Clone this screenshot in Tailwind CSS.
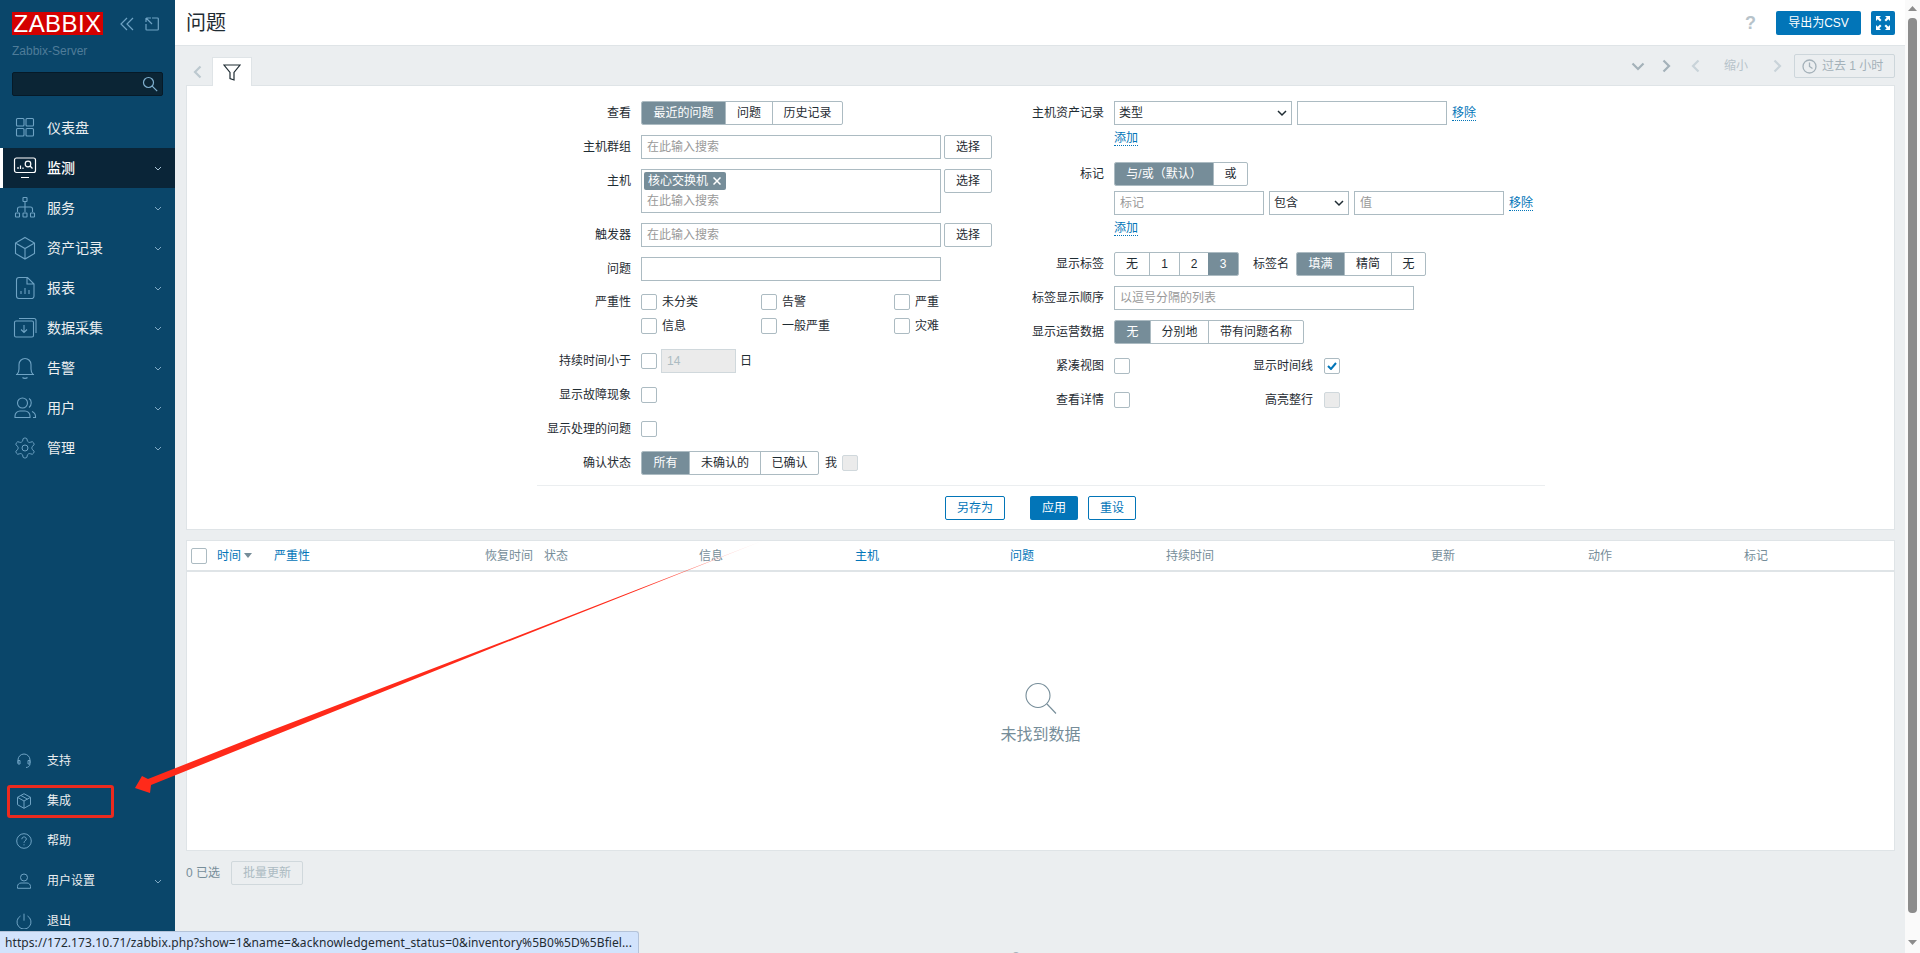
<!DOCTYPE html>
<html lang="zh-CN">
<head>
  <meta charset="UTF-8">
  <title>问题 - Zabbix</title>
  <script src="https://cdn.jsdelivr.net/npm/@tailwindcss/browser@4"></script>
</head>
<body class="relative flex h-[953px] overflow-hidden bg-[#ebeef0] font-['Liberation_Sans','Noto_Sans_CJK_SC',sans-serif] text-[12px] text-[#1f2c33]">

  <!-- sidebar -->
  <aside class="flex w-[175px] shrink-0 flex-col bg-[#0a466a] pb-[12px] text-[#ebeef0]">
    <div class="flex h-[23px] mt-[12px] items-center pl-[12px]">
      <div class="flex h-[23px] w-[91px] items-center justify-center bg-[#d40000] text-[24px] leading-none tracking-[0.4px] text-white">ZABBIX</div>
      <svg class="ml-[16px]" width="16" height="14" viewBox="0 0 16 14" fill="none" stroke="#6fa3c4" stroke-width="1.2"><path d="M8 1 2 7l6 6M14 1 8 7l6 6"/></svg>
      <svg class="ml-[10px]" width="14" height="14" viewBox="0 0 14 14" fill="none" stroke="#6fa3c4" stroke-width="1.2"><path d="M4 1H1.5v0M7 1h5.5a.8.8 0 0 1 .8.8v10.4a.8.8 0 0 1-.8.8H1.8a.8.8 0 0 1-.8-.8V7M1 1l6 6M2 1h4M1 1v4"/></svg>
    </div>
    <div class="mt-[9px] h-[15px] pl-[12px] leading-[15px] text-[#4f7c99]">Zabbix-Server</div>
    <div class="mx-[12px] mt-[13px] flex h-[24px] items-center justify-end rounded-[2px] border border-[#061a28] bg-[#0b2535] pr-[4px]">
      <svg width="16" height="16" viewBox="0 0 16 16" fill="none" stroke="#7fb0cf" stroke-width="1.2"><circle cx="6.5" cy="6.5" r="5"/><path d="m10.2 10.2 5 5"/></svg>
    </div>

    <nav class="mt-[12px] flex flex-col text-[14px]">
      <a class="flex h-[40px] items-center pl-[13px]">
        <svg class="h-[24px] w-[24px]" viewBox="0 0 24 24" fill="none" stroke="#6fa3c4" stroke-width="1.1"><rect x="3.5" y="2.5" width="7.5" height="7.5" rx="1"/><rect x="13" y="2.5" width="7.5" height="7.5" rx="1"/><rect x="3.5" y="12.5" width="7.5" height="7.5" rx="1"/><rect x="13" y="12.5" width="7.5" height="7.5" rx="1"/></svg>
        <span class="ml-[10px]">仪表盘</span>
      </a>
      <a class="flex h-[40px] items-center border-l-[3px] border-white bg-[#0a2538] pl-[10px] font-medium text-white">
        <svg class="h-[24px] w-[24px]" viewBox="0 0 24 24" fill="none" stroke="#fff" stroke-width="1.2"><rect x="1.5" y="2" width="21" height="14.5" rx="2"/><path d="M8 21.5h8M5 13v-2M7.5 13V9.5M10 13v-1.5"/><circle cx="15" cy="8" r="2.8"/><path d="m17 10 2.5 2.5"/></svg>
        <span class="ml-[10px]">监测</span>
        <svg class="ml-auto mr-[13px]" width="8" height="5" viewBox="0 0 8 5" fill="none" stroke="#a9c6d9"><path d="m1 1 3 3 3-3"/></svg>
      </a>
      <a class="flex h-[40px] items-center pl-[13px]">
        <svg class="h-[24px] w-[24px]" viewBox="0 0 24 24" fill="none" stroke="#6fa3c4" stroke-width="1.1"><rect x="10" y="1.5" width="4" height="4" rx=".6"/><path d="M12 5.5V11M4.5 16v-3a2 2 0 0 1 2-2h11a2 2 0 0 1 2 2v3M12 11v5"/><rect x="2.5" y="17" width="4" height="4" rx=".6"/><rect x="10" y="17" width="4" height="4" rx=".6"/><rect x="17.5" y="17" width="4" height="4" rx=".6"/></svg>
        <span class="ml-[10px]">服务</span>
        <svg class="ml-auto mr-[13px]" width="8" height="5" viewBox="0 0 8 5" fill="none" stroke="#7fa9c4"><path d="m1 1 3 3 3-3"/></svg>
      </a>
      <a class="flex h-[40px] items-center pl-[13px]">
        <svg class="h-[24px] w-[24px]" viewBox="0 0 24 24" fill="none" stroke="#6fa3c4" stroke-width="1.1"><path d="M12 1.5 21.5 7v10.5L12 23l-9.5-5.500V7zM2.500 7 12 12.500 21.500 7M12 12.500V23"/></svg>
        <span class="ml-[10px]">资产记录</span>
        <svg class="ml-auto mr-[13px]" width="8" height="5" viewBox="0 0 8 5" fill="none" stroke="#7fa9c4"><path d="m1 1 3 3 3-3"/></svg>
      </a>
      <a class="flex h-[40px] items-center pl-[13px]">
        <svg class="h-[24px] w-[24px]" viewBox="0 0 24 24" fill="none" stroke="#6fa3c4" stroke-width="1.1"><path d="M6 1.500h8.500L21 8v12a2.500 2.500 0 0 1-2.500 2.500H6A2.500 2.500 0 0 1 3.500 20V4A2.500 2.500 0 0 1 6 1.500zM14 1.500V8h7M8 18v-3M12 18v-6M16 18v-4"/></svg>
        <span class="ml-[10px]">报表</span>
        <svg class="ml-auto mr-[13px]" width="8" height="5" viewBox="0 0 8 5" fill="none" stroke="#7fa9c4"><path d="m1 1 3 3 3-3"/></svg>
      </a>
      <a class="flex h-[40px] items-center pl-[13px]">
        <svg class="h-[24px] w-[24px]" viewBox="0 0 24 24" fill="none" stroke="#6fa3c4" stroke-width="1.1"><rect x="1.500" y="5" width="19" height="16" rx="1.500"/><path d="M6 2.500h15a2 2 0 0 1 2 2V17M11 9v7.500M8 13.500l3 3 3-3"/></svg>
        <span class="ml-[10px]">数据采集</span>
        <svg class="ml-auto mr-[13px]" width="8" height="5" viewBox="0 0 8 5" fill="none" stroke="#7fa9c4"><path d="m1 1 3 3 3-3"/></svg>
      </a>
      <a class="flex h-[40px] items-center pl-[13px]">
        <svg class="h-[24px] w-[24px]" viewBox="0 0 24 24" fill="none" stroke="#6fa3c4" stroke-width="1.1"><path d="M4 18.500c1.500-1.500 2-3 2-5.500V8.500a6 6 0 0 1 12 0V13c0 2.500.5 4 2 5.500zM3 18.500h18M9.500 21.500c1.200 1.200 3.800 1.200 5 0"/></svg>
        <span class="ml-[10px]">告警</span>
        <svg class="ml-auto mr-[13px]" width="8" height="5" viewBox="0 0 8 5" fill="none" stroke="#7fa9c4"><path d="m1 1 3 3 3-3"/></svg>
      </a>
      <a class="flex h-[40px] items-center pl-[13px]">
        <svg class="h-[24px] w-[24px]" viewBox="0 0 24 24" fill="none" stroke="#6fa3c4" stroke-width="1.1"><circle cx="9.500" cy="7" r="5"/><path d="M2 21.500v-1.500c0-3 2.500-5 5-5h5c2.500 0 5 2 5 5v1.500zM16 2.500c3 1.500 3 7 0 9M19 15.500c2 .8 3.500 2.500 3.500 5v1h-2.500"/></svg>
        <span class="ml-[10px]">用户</span>
        <svg class="ml-auto mr-[13px]" width="8" height="5" viewBox="0 0 8 5" fill="none" stroke="#7fa9c4"><path d="m1 1 3 3 3-3"/></svg>
      </a>
      <a class="flex h-[40px] items-center pl-[13px]">
        <svg class="h-[24px] w-[24px]" viewBox="0 0 24 24" fill="none" stroke="#6fa3c4" stroke-width="1"><path d="M12.220 2h-.44a2 2 0 0 0-2 2v.18a2 2 0 0 1-1 1.730l-.43.25a2 2 0 0 1-2 0l-.15-.08a2 2 0 0 0-2.730.73l-.22.38a2 2 0 0 0 .73 2.730l.15.1a2 2 0 0 1 1 1.720v.51a2 2 0 0 1-1 1.740l-.15.09a2 2 0 0 0-.73 2.730l.22.38a2 2 0 0 0 2.730.73l.15-.08a2 2 0 0 1 2 0l.43.25a2 2 0 0 1 1 1.730V20a2 2 0 0 0 2 2h.44a2 2 0 0 0 2-2v-.18a2 2 0 0 1 1-1.730l.43-.25a2 2 0 0 1 2 0l.15.08a2 2 0 0 0 2.730-.73l.22-.39a2 2 0 0 0-.73-2.730l-.15-.08a2 2 0 0 1-1-1.740v-.5a2 2 0 0 1 1-1.740l.15-.09a2 2 0 0 0 .73-2.730l-.22-.38a2 2 0 0 0-2.730-.73l-.15.08a2 2 0 0 1-2 0l-.43-.25a2 2 0 0 1-1-1.730V4a2 2 0 0 0-2-2z"/><circle cx="12" cy="12" r="3"/></svg>
        <span class="ml-[10px]">管理</span>
        <svg class="ml-auto mr-[13px]" width="8" height="5" viewBox="0 0 8 5" fill="none" stroke="#7fa9c4"><path d="m1 1 3 3 3-3"/></svg>
      </a>
    </nav>

    <nav class="mt-auto flex flex-col">
      <a class="flex h-[40px] items-center pl-[16px]">
        <svg class="h-[16px] w-[16px]" viewBox="0 0 16 16" fill="none" stroke="#6fa3c4"><path d="M2 10V7a6 6 0 0 1 12 0v3M2 7.500v3.500h2V7.500zM14 7.500v3.500h-2V7.500zM14 11c0 2-2 3.500-4 3.500"/></svg>
        <span class="ml-[15px]">支持</span>
      </a>
      <a class="flex h-[40px] items-center pl-[16px]">
        <svg class="h-[16px] w-[16px]" viewBox="0 0 16 16" fill="none" stroke="#6fa3c4"><path d="M8 .7 14.500 4.300v7.400L8 15.300l-6.500-3.600V4.300zM1.500 4.300 8 8l6.500-3.700M8 8v7.300M5 2.500l6.500 3.700"/></svg>
        <span class="ml-[15px]">集成</span>
      </a>
      <a class="flex h-[40px] items-center pl-[16px]">
        <svg class="h-[16px] w-[16px]" viewBox="0 0 16 16" fill="none" stroke="#6fa3c4"><circle cx="8" cy="8" r="7.300"/><path d="M5.800 6.200c0-3 4.500-3 4.500-.2 0 1.800-2.300 1.800-2.300 3.800M8 11.300v1"/></svg>
        <span class="ml-[15px]">帮助</span>
      </a>
      <a class="flex h-[40px] items-center pl-[16px]">
        <svg class="h-[16px] w-[16px]" viewBox="0 0 16 16" fill="none" stroke="#6fa3c4"><circle cx="8" cy="4.500" r="3.500"/><path d="M1.500 15.300v-1.800c0-2 1.500-3.500 3.500-3.500h6c2 0 3.500 1.500 3.500 3.500v1.800z"/></svg>
        <span class="ml-[15px]">用户设置</span>
        <svg class="ml-auto mr-[13px]" width="8" height="5" viewBox="0 0 8 5" fill="none" stroke="#7fa9c4"><path d="m1 1 3 3 3-3"/></svg>
      </a>
      <a class="flex h-[40px] items-center pl-[16px]">
        <svg class="h-[16px] w-[16px]" viewBox="0 0 16 16" fill="none" stroke="#6fa3c4"><path d="M8 .7v7M4.500 3a7 7 0 1 0 7 0"/></svg>
        <span class="ml-[15px]">退出</span>
      </a>
    </nav>
  </aside>

  <!-- main -->
  <main class="flex w-[1730px] shrink-0 flex-col overflow-hidden">
    <header class="flex h-[46px] shrink-0 items-center border-b border-[#dfe4e7] bg-white pl-[11px] pr-[10px]">
      <h1 class="text-[20px] font-normal leading-none">问题</h1>
      <span class="ml-auto mr-[20px] text-[18px] font-bold leading-none text-[#b7c3ca]">?</span>
      <button class="h-[24px] w-[85px] rounded-[2px] bg-[#0275b8] text-white">导出为CSV</button>
      <button class="ml-[10px] flex h-[24px] w-[24px] items-center justify-center rounded-[2px] bg-[#0275b8]">
        <svg width="16" height="16" viewBox="0 0 16 16" fill="#fff"><path d="M1 1h5L4.300 2.700 6.500 5 5 6.500 2.700 4.300 1 6zM15 1v5l-1.700-1.700L11 6.500 9.500 5l2.200-2.300L10 1zM1 15v-5l1.700 1.700L5 9.500 6.500 11l-2.200 2.300L6 15zM15 15h-5l1.700-1.700L9.500 11 11 9.500l2.300 2.200L15 10z"/></svg>
      </button>
    </header>

    <div class="flex shrink-0 flex-col pl-[11px] pr-[10px]">
      <!-- filter tab bar -->
      <div class="flex h-[40px] items-end">
        <div class="flex h-[29px] w-[26px] items-center pl-[7px]">
          <svg width="9" height="14" viewBox="0 0 9 14" fill="none" stroke="#bcc8cf" stroke-width="2.200"><path d="M7.500 1.500 2 7l5.500 5.500"/></svg>
        </div>
        <div class="z-10 flex h-[29px] w-[40px] items-center justify-center border border-b-0 border-[#dfe4e7] bg-white">
          <svg width="18" height="17" viewBox="0 0 18 17" fill="none" stroke="#1f2c33" stroke-width="1.200"><path d="M1 1h16l-6 7.500V16l-4-1.500v-6z"/></svg>
        </div>
        <div class="ml-auto flex h-[24px] items-center self-center text-[#b7c3ca]">
          <svg class="mr-[17px]" width="14" height="9" viewBox="0 0 14 9" fill="none" stroke="#a4b1b9" stroke-width="2.200"><path d="m1.500 1.500 5.500 5.500 5.500-5.500"/></svg>
          <svg class="mr-[20px]" width="9" height="14" viewBox="0 0 9 14" fill="none" stroke="#a4b1b9" stroke-width="2.200"><path d="M1.500 1.500 7 7l-5.500 5.500"/></svg>
          <svg class="mr-[24px]" width="9" height="14" viewBox="0 0 9 14" fill="none" stroke="#c9d3d9" stroke-width="2.200"><path d="M7.500 1.500 2 7l5.500 5.500"/></svg>
          <span class="mr-[25px]">缩小</span>
          <svg class="mr-[12px]" width="9" height="14" viewBox="0 0 9 14" fill="none" stroke="#c9d3d9" stroke-width="2.200"><path d="M1.500 1.500 7 7l-5.500 5.500"/></svg>
          <div class="flex h-[24px] w-[101px] items-center rounded-[2px] border border-[#cdd6db] pl-[7px] text-[#a4b1b9]">
            <svg width="15" height="15" viewBox="0 0 15 15" fill="none" stroke="#a4b1b9" stroke-width="1.300"><circle cx="7.500" cy="7.500" r="6.500"/><path d="M7.500 3.500v4l3 2"/></svg>
            <span class="ml-[5px] whitespace-nowrap">过去 1 小时</span>
          </div>
        </div>
      </div>

      <!-- filter panel -->
      <section class="-mt-px h-[445px] border border-[#dfe4e7] bg-white pt-[15px]">
        <div class="flex pl-[350px]">
          <!-- left column -->
          <div class="flex h-[374px] w-[473px] flex-col gap-[10px]">
            <div class="flex gap-[10px]">
              <label class="w-[94px] text-right leading-[24px]">查看</label>
              <div class="flex h-[24px] overflow-hidden rounded-[2px] border border-[#acbbc2] leading-[22px]">
                <span class="w-[83px] bg-[#768d99] text-center text-white">最近的问题</span>
                <span class="w-[47px] border-l border-[#acbbc2] text-center">问题</span>
                <span class="w-[70px] border-l border-[#acbbc2] text-center">历史记录</span>
              </div>
            </div>
            <div class="flex gap-[10px]">
              <label class="w-[94px] text-right leading-[24px]">主机群组</label>
              <div class="h-[24px] w-[300px] border border-[#acbbc2] pl-[5px] leading-[22px] text-[#999]">在此输入搜索</div>
              <button class="-ml-[7px] h-[24px] w-[48px] rounded-[2px] border border-[#acbbc2]">选择</button>
            </div>
            <div class="flex gap-[10px]">
              <label class="w-[94px] text-right leading-[24px]">主机</label>
              <div class="h-[44px] w-[300px] border border-[#acbbc2] pl-[2px] pt-[2px] text-[#999]">
                <div class="flex h-[18px] w-[82px] items-center rounded-[2px] bg-[#768d99] pl-[4px] text-white">核心交换机<svg class="ml-[5px]" width="8" height="8" viewBox="0 0 8 8" stroke="#fff" stroke-width="1.500"><path d="m.5.500 7 7M7.500.500l-7 7"/></svg></div>
                <div class="pl-[3px] leading-[22px]">在此输入搜索</div>
              </div>
              <button class="-ml-[7px] h-[24px] w-[48px] rounded-[2px] border border-[#acbbc2]">选择</button>
            </div>
            <div class="flex gap-[10px]">
              <label class="w-[94px] text-right leading-[24px]">触发器</label>
              <div class="h-[24px] w-[300px] border border-[#acbbc2] pl-[5px] leading-[22px] text-[#999]">在此输入搜索</div>
              <button class="-ml-[7px] h-[24px] w-[48px] rounded-[2px] border border-[#acbbc2]">选择</button>
            </div>
            <div class="flex gap-[10px]">
              <label class="w-[94px] text-right leading-[24px]">问题</label>
              <div class="h-[24px] w-[300px] border border-[#acbbc2]"></div>
            </div>
            <div class="flex h-[48px] gap-[10px]">
              <label class="w-[94px] pt-[3px] text-right leading-[16px]">严重性</label>
              <div class="grid grid-cols-[120px_133px_80px] content-start gap-y-[8px] pt-[3px] leading-[16px]">
                <span class="flex h-[16px] items-center"><i class="mr-[5px] h-[16px] w-[16px] rounded-[2px] border border-[#acbbc2]"></i>未分类</span>
                <span class="flex h-[16px] items-center"><i class="mr-[5px] h-[16px] w-[16px] rounded-[2px] border border-[#acbbc2]"></i>告警</span>
                <span class="flex h-[16px] items-center"><i class="mr-[5px] h-[16px] w-[16px] rounded-[2px] border border-[#acbbc2]"></i>严重</span>
                <span class="flex h-[16px] items-center"><i class="mr-[5px] h-[16px] w-[16px] rounded-[2px] border border-[#acbbc2]"></i>信息</span>
                <span class="flex h-[16px] items-center"><i class="mr-[5px] h-[16px] w-[16px] rounded-[2px] border border-[#acbbc2]"></i>一般严重</span>
                <span class="flex h-[16px] items-center"><i class="mr-[5px] h-[16px] w-[16px] rounded-[2px] border border-[#acbbc2]"></i>灾难</span>
              </div>
            </div>
            <div class="flex h-[24px] items-center gap-[10px]">
              <label class="w-[94px] text-right">持续时间小于</label>
              <i class="h-[16px] w-[16px] rounded-[2px] border border-[#acbbc2]"></i>
              <div class="-ml-[6px] h-[24px] w-[75px] border border-[#d0d8dc] bg-[#ebebeb] pl-[5px] leading-[22px] text-[#acbbc2]">14</div>
              <span class="-ml-[6px]">日</span>
            </div>
            <div class="flex h-[24px] items-center gap-[10px]">
              <label class="w-[94px] text-right">显示故障现象</label>
              <i class="h-[16px] w-[16px] rounded-[2px] border border-[#acbbc2]"></i>
            </div>
            <div class="flex h-[24px] items-center gap-[10px]">
              <label class="w-[94px] text-right">显示处理的问题</label>
              <i class="h-[16px] w-[16px] rounded-[2px] border border-[#acbbc2]"></i>
            </div>
            <div class="flex h-[24px] items-center gap-[10px]">
              <label class="w-[94px] text-right">确认状态</label>
              <div class="flex h-[24px] overflow-hidden rounded-[2px] border border-[#acbbc2] leading-[22px]">
                <span class="w-[47px] bg-[#768d99] text-center text-white">所有</span>
                <span class="w-[71px] border-l border-[#acbbc2] text-center">未确认的</span>
                <span class="w-[58px] border-l border-[#acbbc2] text-center">已确认</span>
              </div>
              <span class="-ml-[4px]">我</span>
              <i class="-ml-[5px] h-[16px] w-[16px] rounded-[2px] border border-[#d0d8dc] bg-[#ebebeb]"></i>
            </div>
          </div>

          <!-- right column -->
          <div class="flex flex-col">
            <div class="flex gap-[10px]">
              <label class="w-[94px] text-right leading-[24px]">主机资产记录</label>
              <div class="flex h-[24px] w-[178px] items-center justify-between border border-[#acbbc2] pl-[4px] pr-[4px]">类型<svg width="10" height="7" viewBox="0 0 10 7" fill="none" stroke="#1f2c33" stroke-width="1.500"><path d="m1 1 4 4 4-4"/></svg></div>
              <div class="-ml-[5px] h-[24px] w-[150px] border border-[#acbbc2]"></div>
              <a class="-ml-[5px] mt-[5px] h-[15px] border-b border-dotted border-[#0275b8] leading-[14px] text-[#0275b8]">移除</a>
            </div>
            <div class="ml-[104px] mt-[6px] h-[31px]"><a class="block h-[15px] w-fit border-b border-dotted border-[#0275b8] leading-[14px] text-[#0275b8]">添加</a></div>
            <div class="flex gap-[10px]">
              <label class="w-[94px] text-right leading-[24px]">标记</label>
              <div class="flex h-[24px] overflow-hidden rounded-[2px] border border-[#acbbc2] leading-[22px]">
                <span class="w-[98px] bg-[#768d99] text-center text-white">与/或（默认）</span>
                <span class="w-[34px] border-l border-[#acbbc2] text-center">或</span>
              </div>
            </div>
            <div class="ml-[104px] mt-[5px] flex gap-[5px]">
              <div class="h-[24px] w-[150px] border border-[#acbbc2] pl-[5px] leading-[22px] text-[#999]">标记</div>
              <div class="flex h-[24px] w-[80px] items-center justify-between border border-[#acbbc2] px-[4px]">包含<svg width="10" height="7" viewBox="0 0 10 7" fill="none" stroke="#1f2c33" stroke-width="1.500"><path d="m1 1 4 4 4-4"/></svg></div>
              <div class="h-[24px] w-[150px] border border-[#acbbc2] pl-[5px] leading-[22px] text-[#999]">值</div>
              <a class="mt-[5px] h-[15px] border-b border-dotted border-[#0275b8] leading-[14px] text-[#0275b8]">移除</a>
            </div>
            <div class="ml-[104px] mt-[6px] h-[31px]"><a class="block h-[15px] w-fit border-b border-dotted border-[#0275b8] leading-[14px] text-[#0275b8]">添加</a></div>
            <div class="flex gap-[10px]">
              <label class="w-[94px] text-right leading-[24px]">显示标签</label>
              <div class="flex h-[24px] overflow-hidden rounded-[2px] border border-[#acbbc2] leading-[22px]">
                <span class="w-[34px] text-center">无</span>
                <span class="w-[30px] border-l border-[#acbbc2] text-center">1</span>
                <span class="w-[29px] border-l border-[#acbbc2] text-center">2</span>
                <span class="w-[30px] bg-[#768d99] text-center text-white">3</span>
              </div>
              <label class="-ml-[10px] w-[50px] text-right leading-[24px]">标签名</label>
              <div class="-ml-[3px] flex h-[24px] overflow-hidden rounded-[2px] border border-[#acbbc2] leading-[22px]">
                <span class="w-[47px] bg-[#768d99] text-center text-white">填满</span>
                <span class="w-[47px] border-l border-[#acbbc2] text-center">精简</span>
                <span class="w-[34px] border-l border-[#acbbc2] text-center">无</span>
              </div>
            </div>
            <div class="mt-[10px] flex gap-[10px]">
              <label class="w-[94px] text-right leading-[24px]">标签显示顺序</label>
              <div class="h-[24px] w-[300px] border border-[#acbbc2] pl-[5px] leading-[22px] text-[#999]">以逗号分隔的列表</div>
            </div>
            <div class="mt-[10px] flex gap-[10px]">
              <label class="w-[94px] text-right leading-[24px]">显示运营数据</label>
              <div class="flex h-[24px] overflow-hidden rounded-[2px] border border-[#acbbc2] leading-[22px]">
                <span class="w-[35px] bg-[#768d99] text-center text-white">无</span>
                <span class="w-[58px] border-l border-[#acbbc2] text-center">分别地</span>
                <span class="w-[95px] border-l border-[#acbbc2] text-center">带有问题名称</span>
              </div>
            </div>
            <div class="mt-[10px] flex h-[24px] items-center gap-[10px]">
              <label class="w-[94px] text-right">紧凑视图</label>
              <i class="h-[16px] w-[16px] rounded-[2px] border border-[#acbbc2]"></i>
              <label class="-ml-[10px] w-[183px] text-right">显示时间线</label>
              <i class="ml-px flex h-[16px] w-[16px] items-center justify-center rounded-[2px] border border-[#acbbc2]"><svg width="10" height="8" viewBox="0 0 10 8" fill="none" stroke="#0275b8" stroke-width="2"><path d="m1 4 3 3 5-6"/></svg></i>
            </div>
            <div class="mt-[10px] flex h-[24px] items-center gap-[10px]">
              <label class="w-[94px] text-right">查看详情</label>
              <i class="h-[16px] w-[16px] rounded-[2px] border border-[#acbbc2]"></i>
              <label class="-ml-[10px] w-[183px] text-right">高亮整行</label>
              <i class="ml-px h-[16px] w-[16px] rounded-[2px] border border-[#d0d8dc] bg-[#ebebeb]"></i>
            </div>
          </div>
        </div>

        <div class="ml-[350px] mt-[10px] w-[1008px] border-t border-[#ebeef0]"></div>
        <div class="ml-[758px] mt-[10px] flex">
          <button class="h-[24px] w-[60px] rounded-[2px] border border-[#0275b8] text-[#0275b8]">另存为</button>
          <button class="ml-[25px] h-[24px] w-[48px] rounded-[2px] bg-[#0275b8] text-white">应用</button>
          <button class="ml-[10px] h-[24px] w-[48px] rounded-[2px] border border-[#0275b8] text-[#0275b8]">重设</button>
        </div>
      </section>

      <!-- problems table -->
      <section class="mt-[10px] flex h-[311px] flex-col border border-[#dfe4e7] bg-white">
        <div class="flex h-[31px] shrink-0 items-center border-b-2 border-[#dfe4e7] text-[#768d99]">
          <div class="w-[30px] pl-[4px]"><i class="block h-[16px] w-[16px] rounded-[2px] border border-[#acbbc2]"></i></div>
          <div class="flex w-[57px] items-center text-[#0275b8]">时间<svg class="ml-[3px]" width="8" height="5" viewBox="0 0 8 5" fill="#768d99"><path d="M0 0h8L4 5z"/></svg></div>
          <div class="w-[211px] text-[#0275b8]">严重性</div>
          <div class="w-[59px]">恢复时间</div>
          <div class="w-[155px]">状态</div>
          <div class="w-[156px]">信息</div>
          <div class="w-[155px] text-[#0275b8]">主机</div>
          <div class="w-[156px] text-[#0275b8]">问题</div>
          <div class="w-[265px]">持续时间</div>
          <div class="w-[157px]">更新</div>
          <div class="w-[156px]">动作</div>
          <div>标记</div>
        </div>
        <div class="flex flex-col items-center pt-[110px] text-[#768d99]">
          <svg width="34" height="34" viewBox="0 0 34 34" fill="none" stroke="#768d99" stroke-width="1.100"><circle cx="14" cy="13.500" r="12"/><path d="m23 22 9 9.500"/></svg>
          <span class="mt-[8px] text-[16px] leading-[22px]">未找到数据</span>
        </div>
      </section>

      <div class="mt-[10px] flex h-[24px] items-center text-[#768d99]">
        <span>0 已选</span>
        <button class="ml-[11px] h-[24px] w-[72px] rounded-[2px] border border-[#d0d8dc] text-[#acbbc2]">批量更新</button>
      </div>
      <footer class="mt-[64px] text-center text-[#768d99]">Zabbix 7.0.12. © 2001–2025, Zabbix SIA</footer>
    </div>
  </main>

  <!-- browser scrollbar -->
  <div class="flex w-[15px] shrink-0 flex-col items-center bg-[#fafafa]">
    <svg class="mt-[6px]" width="9" height="5" viewBox="0 0 9 5" fill="#8c8c8c"><path d="M4.500 0 9 5H0z"/></svg>
    <div class="mt-[7px] h-[895px] w-[9px] rounded-[4px] bg-[#8c8c8c]"></div>
    <svg class="mt-[27px]" width="9" height="5" viewBox="0 0 9 5" fill="#8c8c8c"><path d="M0 0h9L4.500 5z"/></svg>
  </div>

  <!-- annotation drawn over the screenshot -->
  <div class="absolute left-[7px] top-[785px] h-[33px] w-[107px] rounded-[3px] border-[3px] border-[#ec2a1e]"></div>
  <svg class="pointer-events-none absolute left-0 top-0" width="1920" height="953" viewBox="0 0 1920 953">
    <defs>
      <linearGradient id="arrowFade" gradientUnits="userSpaceOnUse" x1="780" y1="534" x2="640" y2="590">
        <stop offset="0" stop-color="#ff2a1a" stop-opacity="0"></stop>
        <stop offset="1" stop-color="#ff2a1a"></stop>
      </linearGradient>
    </defs>
    <path fill="url(#arrowFade)" d="M135 788 142 776 148 779 263 733.500 500 642.800 780 534 500 644.800 263 740 151 785 150 793z"></path>
  </svg>

  <!-- chrome link status bubble -->
  <div class="absolute bottom-0 left-0 flex h-[22px] w-[639px] items-center rounded-tr-[3px] border-r border-t border-[#b4c3d9] bg-[#d2e3fc] pl-[5px] font-['Noto_Sans',sans-serif] text-[12px] tracking-[0.08px] text-[#1f2c33] whitespace-nowrap">https://172.173.10.71/zabbix.php?show=1&amp;name=&amp;acknowledgement_status=0&amp;inventory%5B0%5D%5Bfiel...</div>
</body>
</html>
